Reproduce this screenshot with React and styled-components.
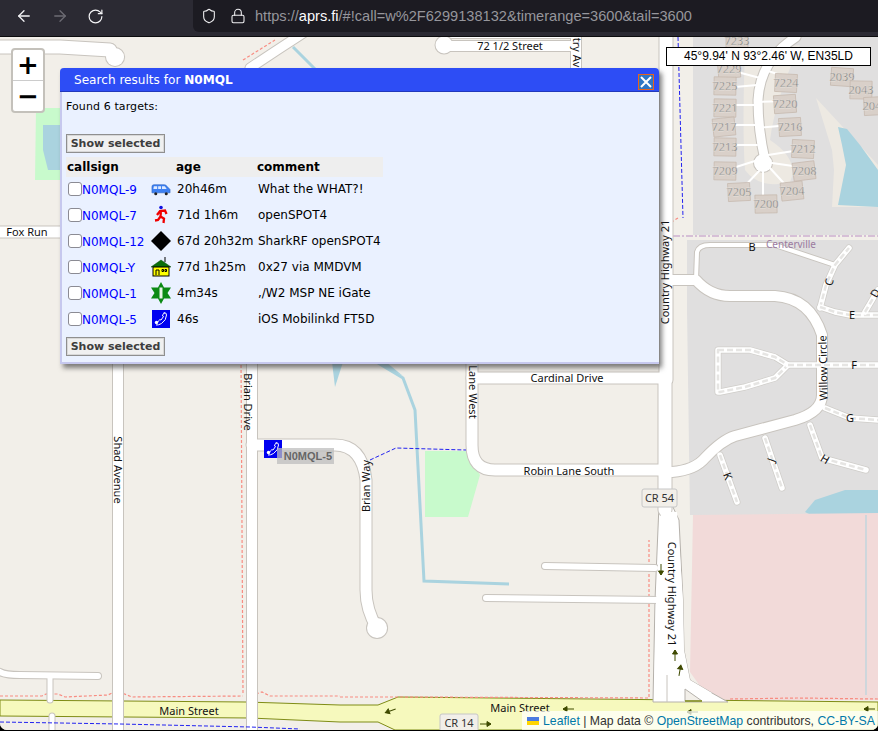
import React from "react";
import styled, { createGlobalStyle } from "styled-components";
import { ArrowLeft, ArrowRight, RotateCw, Shield, Lock } from "lucide-react";

const GlobalStyle = createGlobalStyle`
  html, body { margin: 0; padding: 0; background: #000; }
  body { width: 878px; height: 731px; overflow: hidden; font-family: "Liberation Sans", Arial, sans-serif; }
`;

const Page = styled.div`
  width: 878px;
  height: 731px;
  display: flex;
  flex-direction: column;
  background: #000;
`;

const BrowserBar = styled.header`
  height: 36px;
  flex: none;
  display: flex;
  align-items: flex-start;
  background: #2b2a33;
  border-bottom: 1px solid #0c0c0e;
`;

const NavButtons = styled.div`
  width: 193px;
  height: 32px;
  padding-left: 15px;
  box-sizing: border-box;
  display: flex;
  align-items: center;
  gap: 18px;
  flex: none;
`;

const NavIcon = styled.span`
  display: flex;
  color: ${(p) => (p.$dim ? "#6d6c74" : "#f4f4f6")};
`;

const UrlBox = styled.div`
  flex: 1;
  height: 32px;
  display: flex;
  align-items: center;
  padding-left: 8px;
  background: #1c1b22;
  border-bottom-left-radius: 6px;
  color: #f0f0f2;
`;

const UrlIcons = styled.div`
  display: flex;
  align-items: center;
  gap: 13px;
  width: 54px;
`;

const UrlText = styled.div`
  font-size: 14.6px;
  color: #96969c;
  white-space: nowrap;
  b { font-weight: 400; color: #fbfbfe; }
`;

const MapArea = styled.main`
  position: relative;
  flex: 1;
  margin-bottom: 1px;
  overflow: hidden;
  background: #f2efe9;
  border-radius: 0 0 7px 7px;
`;

const MapSvg = styled.svg`
  display: block;
  width: 878px;
  height: 693px;
`;

const ZoomControl = styled.div`
  position: absolute;
  left: 11px;
  top: 11px;
  width: 30px;
  border: 2px solid #c4c1bb;
  border-radius: 4px;
  background: #fff;
`;

const ZoomButton = styled.div`
  height: 30px;
  display: flex;
  align-items: center;
  justify-content: center;
  font: bold 26px "DejaVu Sans", sans-serif;
  line-height: 30px;
  color: #000;
  & + & { border-top: 1px solid #ccc; }
`;

const CoordBox = styled.div`
  position: absolute;
  left: 666px;
  top: 10px;
  width: 203px;
  height: 17px;
  border: 1px solid #000;
  background: #fff;
  font-size: 12px;
  line-height: 17px;
  text-align: center;
  color: #000;
  white-space: nowrap;
`;

const Attribution = styled.div`
  position: absolute;
  right: 0;
  bottom: 0;
  width: 356px;
  height: 19px;
  box-sizing: border-box;
  padding-left: 5px;
  display: flex;
  align-items: center;
  gap: 4px;
  background: rgba(255, 255, 255, 0.72);
  font-size: 12.25px;
  color: #333;
  white-space: nowrap;
  a { color: #0078a8; text-decoration: none; }
`;

const Popup = styled.section`
  position: absolute;
  left: 60px;
  top: 31px;
  width: 599px;
  height: 296px;
  box-sizing: border-box;
  display: flex;
  flex-direction: column;
  background: #eaf1ff;
  border: solid #c6c8ee;
  border-width: 0 0 2px 2px;
  border-radius: 4px 4px 0 0;
  box-shadow: 3px 4px 5px rgba(60, 60, 60, 0.65);
  font-family: "DejaVu Sans", Verdana, sans-serif;
  font-size: 11px;
  color: #000;
`;

const TitleBar = styled.div`
  height: 23px;
  flex: none;
  margin-left: -2px;
  padding-left: 14px;
  display: flex;
  align-items: center;
  justify-content: space-between;
  background: #2d4df5;
  border-bottom: 1px solid #2238bb;
  border-radius: 4px 4px 0 0;
  font-size: 12.1px;
  color: #fff;
  b { font-weight: 700; }
`;

const CloseButton = styled.div`
  width: 14px;
  height: 14px;
  margin: 5px 5px 0 0;
  border: 1px solid #e8641b;
  background: #2f76c4;
  display: flex;
  align-items: center;
  justify-content: center;
`;

const PopupBody = styled.div`
  flex: 1;
  padding: 7px 0 0 4px;
  display: flex;
  flex-direction: column;
  align-items: flex-start;
`;

const FoundText = styled.div`
  height: 15px;
  line-height: 15px;
  margin-bottom: 20px;
  letter-spacing: 0.1px;
`;

const ShowButton = styled.div`
  width: 99px;
  height: 19px;
  box-sizing: border-box;
  border: 1px solid #8f8f8f;
  box-shadow: inset 0 0 0 1px #d8d8d8;
  background: #f0f0f0;
  font-weight: 700;
  font-size: 11px;
  line-height: 17px;
  text-align: center;
  color: #3d3d3d;
  white-space: nowrap;
`;

const Results = styled.table`
  width: 317px;
  margin: 4px 0 4px;
  border-collapse: collapse;
  table-layout: fixed;
  th {
    height: 20px;
    padding: 0 0 0 1px;
    background: #eeeeee;
    font-size: 12px;
    font-weight: 700;
    text-align: left;
  }
  th + th { padding-left: 0; }
  td {
    height: 26px;
    padding: 0 0 2px 1px;
    box-sizing: border-box;
    white-space: nowrap;
    font-size: 12px;
    vertical-align: middle;
  }
`;

const Tick = styled.input.attrs({ type: "checkbox" })`
  appearance: none;
  width: 14px;
  height: 14px;
  margin: 0 0 0 1px;
  vertical-align: -2px;
  background: #fff;
  border: 1px solid #8b8b93;
  border-radius: 3px;
`;

const CallLink = styled.a`
  color: #0000ff;
  text-decoration: none;
  font-size: 12px;
`;

const SymbolCell = styled.span`
  display: flex;
  align-items: center;
  justify-content: center;
  width: 20px;
  height: 20px;
  margin-left: -1px;
`;

const Marker = styled.div`
  position: absolute;
  left: 264px;
  top: 403px;
  width: 18px;
  height: 18px;
  display: flex;
`;

const MarkerLabel = styled.div`
  position: absolute;
  left: 277px;
  top: 411px;
  width: 57px;
  height: 16px;
  background: rgba(190, 190, 190, 0.75);
  font: bold 11px/17px "Liberation Sans", Arial, sans-serif;
  text-align: right;
  padding-right: 2px;
  box-sizing: border-box;
  color: #666;
`;

const VanIcon = () => (
  <svg width="21" height="20" viewBox="0 0 21 20">
    <path d="M1 14V7.500Q1 5.500 3 5.500H14Q16 5.500 17 7.500L20 10.500V14Z" fill="#3d80f2" stroke="#2a60c0" strokeWidth=".6" />
    <path d="M3 7H6.500V10H2.500ZM7.500 7H10.500V10H7.500ZM11.500 7H14.500L16.500 10H11.500Z" fill="#dfeaff" />
    <circle cx="5" cy="15" r="1.600" fill="#222" />
    <circle cx="16" cy="15" r="1.600" fill="#222" />
  </svg>
);

const RunnerIcon = () => (
  <svg width="20" height="20" viewBox="0 0 20 20">
    <circle cx="10" cy="2.500" r="1.800" fill="#1010e0" />
    <path d="M6 10l3-4 5-.5 1.500 3.500M10 6l-.5 5.500 3.500 2-.5 4.500M9.500 11.500L7 15l-3 .5" fill="none" stroke="#f00000" strokeWidth="2.300" />
  </svg>
);

const DiamondIcon = () => (
  <svg width="20" height="20" viewBox="0 0 20 20">
    <path d="M10 0l10 10-10 10L0 10z" fill="#000" />
  </svg>
);

const HouseIcon = () => (
  <svg width="20" height="20" viewBox="0 0 20 20">
    <path d="M14 0v5" stroke="#000" strokeWidth="1" />
    <path d="M0 10l10-7 10 7z" fill="#0a6f0a" stroke="#084a08" strokeWidth=".5" />
    <rect x="2" y="10" width="16" height="9" fill="#ffff00" stroke="#000" />
    <path d="M5 18v-5h3v5M11 12.500h1.500v2H11zM14 12.500h1.500v2H14z" fill="none" stroke="#000" />
  </svg>
);

const StarIcon = () => (
  <svg width="20" height="22" viewBox="0 0 20 22">
    <path d="M10 0l3 5.500h7l-3.500 5.500 3.500 5.500h-7L10 22l-3-5.500H0L3.500 11 0 5.500h7z" fill="#0b8a14" />
    <rect x="8.500" y="5.500" width="3" height="11" fill="#e8f4e8" />
  </svg>
);

const PhoneIcon = () => (
  <svg width="18" height="18" viewBox="0 0 18 18">
    <rect width="18" height="18" fill="#0000f0" />
    <path d="M11.500 3q3 -1 3 2 0 5-5 8.500-3 1.800-5.500 1.500M13 2.500q-3 2-2.500 3.500l1 .5-2.500 3.500-1.200-.3q-1.500 1-2 2.300" fill="none" stroke="#fff" strokeWidth="1" />
    <circle cx="4.500" cy="12.500" r="1.700" fill="#fff" />
  </svg>
);

const RESULTS = [
  { call: "N0MQL-9", icon: <VanIcon />, age: "20h46m", comment: "What the WHAT?!" },
  { call: "N0MQL-7", icon: <RunnerIcon />, age: "71d 1h6m", comment: "openSPOT4" },
  { call: "N0MQL-12", icon: <DiamondIcon />, age: "67d 20h32m", comment: "SharkRF openSPOT4" },
  { call: "N0MQL-Y", icon: <HouseIcon />, age: "77d 1h25m", comment: "0x27 via MMDVM" },
  { call: "N0MQL-1", icon: <StarIcon />, age: "4m34s", comment: ",/W2 MSP NE iGate" },
  { call: "N0MQL-5", icon: <PhoneIcon />, age: "46s", comment: "iOS Mobilinkd FT5D" },
];

// map data, page coordinates (the svg viewBox starts at y=37)
const ROADS = [
  ["M-5 47L60 47 110 50", 13],
  ["M115 57L115.100 57", 18],
  ["M444 46H576", 10],
  ["M444 45L444.100 45", 17],
  ["M452 35H576", 6],
  ["M308 30Q280 48 250 68", 9],
  ["M576 30V70", 10],
  ["M-5 232L65 232", 11],
  ["M666 30V380M665 380V510", 13],
  ["M118 360V731", 10],
  ["M252 360V731", 10],
  ["M252 445H335Q362 445 366 480V590Q366 610 377 628", 11],
  ["M377 628L377.100 628", 20],
  ["M472 360V445Q472 470 495 470H664", 11],
  ["M472 378H664", 11],
  ["M486 598L660 600", 6],
  ["M545 566L655 568", 6],
  ["M0 672Q5 675 20 675L98 676", 6],
  ["M50 676V700", 5],
  ["M52 716V731", 5],
  ["M672 280H696Q710 296 730 296H775Q810 298 822 335V395Q822 412 795 420L735 436Q722 440 705 458 695 470 672 472", 10],
  ["M696 280L697 252Q699 245 710 245H775L835 265", 4],
  ["M796 37Q760 60 758 100 758 130 765 160", 9],
  ["M763 163L763.100 163", 18],
];

// the highway widens into two carriageways before Main Street
const HIGHWAY_SOUTH = "M659 505L655 600 653 702H728L712 693 690 680 684 650 683 600 679 520 672 505Z";

const TRACKS = [
  "M718 350H750L775 357 788 365 775 378 745 387 720 392H718Z",
  "M788 365H878",
  "M825 408L850 418 878 420",
  "M810 425L822 458 866 470",
  "M765 438L782 488",
  "M720 455L737 502",
  "M820 308L826 285 835 265 849 248",
  "M820 307L835 312 850 315H878",
  "M865 312L878 290",
];

const DRIVEWAYS = [
  "M730 70L760 78", "M735 87L757 85", "M735 105H757", "M735 125H757", "M735 145H757",
  "M733 168L758 160", "M741 190L760 170", "M763 170V204", "M770 168L790 190",
  "M772 163L800 167", "M768 155L800 150", "M757 128L790 125", "M757 102L785 101", "M765 70L790 78",
];

const HOUSES = [
  [737, 41, "7233"], [729, 69, "7229"], [725, 86, "7225"], [725, 108, "7221"], [724, 127, "7217"],
  [725, 147, "7213"], [725, 171, "7209"], [739, 192, "7205"], [766, 204, "7200"], [792, 191, "7204"],
  [804, 171, "7208"], [803, 149, "7212"], [790, 127, "7216"], [785, 104, "7220"], [786, 83, "7224"],
  [842, 77, "2039"], [861, 90, "2043"], [875, 106, "2047"],
];

const LABELS = [
  [510, 46, 0, "72 1/2 Street", 11],
  [27, 232, 0, "Fox Run", 11],
  [567, 378, 0, "Cardinal Drive", 11],
  [569, 471, 0, "Robin Lane South", 11],
  [189, 711, 0, "Main Street", 11],
  [520, 708, 0, "Main Street", 11],
  [118, 470, 90, "Shad Avenue", 11],
  [248, 402, 90, "Brian Drive", 11],
  [473, 392, 90, "Lane West", 11],
  [366, 486, -90, "Brian Way", 11],
  [665, 272, -90, "Country Highway 21", 11],
  [672, 594, 90, "Country Highway 21", 11],
  [577, 52, 90, "Country Avenue", 11],
  [823, 368, -91, "Willow Circle", 11],
  [752, 247, 0, "B", 11],
  [829, 282, -75, "C", 11],
  [852, 315, 0, "E", 11],
  [875, 293, -60, "D", 11],
  [854, 365, 0, "F", 11],
  [850, 418, 0, "G", 11],
  [825, 459, 30, "H", 11],
  [771, 460, -70, "J", 11],
  [728, 476, 70, "K", 11],
];

const ARROWS = [
  [390, 711, -20], [568, 709, 0], [692, 712, 0], [869, 709, 0], [486, 724, 180],
  [661, 570, -90], [675, 655, 90], [680, 670, 100],
];

function MapDrawing() {
  return (
    <MapSvg viewBox="0 37 878 693">
      <rect x="0" y="37" width="878" height="693" fill="#f2efe9" />
      <path d="M36 108H60V180H35Z" fill="#c8facc" />
      <path d="M43 125H60V170H48L43 150Z" fill="#aad3df" />
      <path d="M425 451H466L480 475 468 517H425Z" fill="#c8facc" />
      <path d="M860 37H878V45H870Z" fill="#c8facc" />
      <path d="M693 37H878V235H693Z" fill="#e0dfdf" />
      <path d="M686 240H878V515H690Z" fill="#e0dfdf" />
      <path d="M745 50Q742 130 745 170 760 190 790 182 800 160 770 140 775 100 800 45Z" fill="#ede9e2" />
      <path d="M816 98L878 165V207H832L834 170 832 150Z" fill="#ede9e2" />
      <path d="M838 127L847 129 860 145 878 170V207L838 205 842 185 846 165 842 145Z" fill="#aad3df" />
      <path d="M805 512L815 500 845 490 878 490V515L815 517Z" fill="#aad3df" />
      <path d="M693 515L878 513V700H710L690 672Z" fill="#f2dad9" />
      <path d="M866 515V695" stroke="#aad3df" strokeWidth="1" />
      <path d="M675 37H692V235H675ZM672 240H687V515H672Z" fill="#f2efe9" />

      <path d="M293 47L316 70" stroke="#aad3df" strokeWidth="3" fill="none" />
      <path d="M373 360L403 378 415 410 424 581 509 584" stroke="#aad3df" strokeWidth="3" fill="none" />
      <path d="M332 362H343L335 387Z" fill="#aad3df" />
      <path d="M374 362H386L403 376Z" fill="#aad3df" />

      <path d="M0 700L246 702 340 705 378 705 398 697 878 702V730H395L378 722 340 722 250 718 0 716Z" fill="#f6f9bd" stroke="#7f8c16" strokeWidth="1" />

      {/* boundaries */}
      <g fill="none" stroke="#f88c82" strokeWidth="1.200" strokeDasharray="3 2">
        <path d="M243 60L275 40" />
        <path d="M241 360L243 694" />
        <path d="M0 696L42 696 46 694 58 694 65 697 108 695 112 693 122 693 132 697 243 696M256 694L262 692 270 696 340 696" />
        <path d="M340 697H398L649 698V540M730 699L797 698 878 699" />
        <path d="M663 37V70" stroke="#cf9dc0" />
        <path d="M678 218L662 228" />
      </g>
      <path d="M660 236H878" stroke="#cdb0cf" strokeWidth="1.500" strokeDasharray="7 2 2 2" fill="none" />

      <path d={HIGHWAY_SOUTH} fill="#fff" stroke="#b5b1ab" strokeWidth="1" />

      {/* roads, casing first */}
      <g fill="none" strokeLinecap="round" strokeLinejoin="round">
        {ROADS.map(([d, w]) => (
          <path key={d + "c"} d={d} stroke="#c8c4be" strokeWidth={w + 2} />
        ))}
        {TRACKS.map((d) => (
          <path key={d + "c"} d={d} stroke="#cfcdc9" strokeWidth="7" />
        ))}
        {DRIVEWAYS.map((d) => (
          <path key={d} d={d} stroke="#fff" strokeWidth="2" />
        ))}
        {ROADS.map(([d, w]) => (
          <path key={d} d={d} stroke="#fff" strokeWidth={w} />
        ))}
        {TRACKS.map((d) => (
          <g key={d}>
            <path d={d} stroke="#fff" strokeWidth="5.500" />
            <path d={d} stroke="#e6e5e3" strokeWidth="2.500" strokeDasharray="6 3" strokeLinecap="butt" />
          </g>
        ))}
      </g>
      <path d="M661 512H677L683 600 684 650 690 680 712 693 700 701H654L656 600Z" fill="#fff" />
      <path d="M667 675V702" stroke="#c8c4be" strokeWidth="1" />
      <path d="M685 689L702 701H685Z" fill="#f2efe9" stroke="#b5b1ab" strokeWidth="1" />
      <path d="M685 701H702" stroke="#7f8c16" strokeWidth="1.500" />

      <path d="M0 722L120 724 250 727 300 729" stroke="#2222f0" strokeDasharray="4 2" fill="none" />
      <path d="M678 37L683 218" stroke="#2222f0" strokeDasharray="4 2" fill="none" />
      <path d="M370 460L396 448 466 450" stroke="#2222f0" strokeDasharray="4 2" fill="none" />

      {HOUSES.map(([x, y, n]) => (
        <g key={n}>
          <rect x={x - 11} y={y - 9} width="22" height="18" fill="#d9d0c9" stroke="#c4b6ab" strokeWidth=".7" transform={`rotate(${(x * 7) % 17 - 8} ${x} ${y})`} />
          <text x={x} y={y + 4} textAnchor="middle" fontFamily="Noto Sans" fontSize="11" fill="#666" stroke="#f2efe9" strokeWidth="0.300">{n}</text>
        </g>
      ))}

      {LABELS.map(([x, y, r, t, s]) => (
        <text key={t + x} x={x} y={y + 4} textAnchor="middle" fontFamily="Noto Sans" fontSize={s} fill="#111" transform={r ? `rotate(${r} ${x} ${y})` : undefined}>{t}</text>
      ))}
      <text x="791" y="248" textAnchor="middle" fontFamily="Noto Sans" fontSize="10" fill="#9b7ba0">Centerville</text>

      {[[642, 489, 35, "CR 54"], [440, 714, 38, "CR 14"]].map(([x, y, w, t]) => (
        <g key={t}>
          <rect x={x} y={y} width={w} height="18" rx="2" fill="#f2efe9" stroke="#c6c6c6" />
          <text x={x + w / 2} y={y + 13} textAnchor="middle" fontFamily="Noto Sans" fontSize="11" fill="#333">{t}</text>
        </g>
      ))}

      {ARROWS.map(([x, y, r]) => (
        <path key={x + "-" + y} d="M-5 0H6M-5 0L-1 -2.500V2.500Z" transform={`translate(${x} ${y}) rotate(${r})`} stroke="#3f4a00" strokeWidth="1" fill="#3f4a00" />
      ))}
    </MapSvg>
  );
}

export default function App() {
  return (
    <Page>
      <GlobalStyle />
      <BrowserBar>
        <NavButtons>
          <NavIcon><ArrowLeft size={18} strokeWidth={1.700} /></NavIcon>
          <NavIcon $dim><ArrowRight size={18} strokeWidth={1.700} /></NavIcon>
          <NavIcon><RotateCw size={17} strokeWidth={1.700} /></NavIcon>
        </NavButtons>
        <UrlBox>
          <UrlIcons>
            <Shield size={16} strokeWidth={1.600} />
            <Lock size={16} strokeWidth={1.600} />
          </UrlIcons>
          <UrlText>https://<b>aprs.fi</b>/#!call=w%2F6299138132&amp;timerange=3600&amp;tail=3600</UrlText>
        </UrlBox>
      </BrowserBar>

      <MapArea>
        <MapDrawing />
        <ZoomControl>
          <ZoomButton>+</ZoomButton>
          <ZoomButton>−</ZoomButton>
        </ZoomControl>
        <CoordBox>45°9.94' N 93°2.46' W, EN35LD</CoordBox>

        <Marker><PhoneIcon /></Marker>
        <MarkerLabel>N0MQL-5</MarkerLabel>

        <Popup>
          <TitleBar>
            <span>Search results for <b>N0MQL</b></span>
            <CloseButton>
              <svg width="12" height="12" viewBox="0 0 12 12">
                <path d="M1 1L11 11M11 1L1 11" stroke="#fff" strokeWidth="2" />
              </svg>
            </CloseButton>
          </TitleBar>
          <PopupBody>
            <FoundText>Found 6 targets:</FoundText>
            <ShowButton>Show selected</ShowButton>
            <Results>
              <colgroup>
                <col style={{ width: 85 }} />
                <col style={{ width: 25 }} />
                <col style={{ width: 81 }} />
                <col />
              </colgroup>
              <thead>
                <tr>
                  <th>callsign</th>
                  <th />
                  <th>age</th>
                  <th>comment</th>
                </tr>
              </thead>
              <tbody>
                {RESULTS.map((r) => (
                  <tr key={r.call}>
                    <td><Tick /><CallLink href="#">{r.call}</CallLink></td>
                    <td><SymbolCell>{r.icon}</SymbolCell></td>
                    <td>{r.age}</td>
                    <td>{r.comment}</td>
                  </tr>
                ))}
              </tbody>
            </Results>
            <ShowButton>Show selected</ShowButton>
          </PopupBody>
        </Popup>

        <Attribution>
          <svg width="12" height="8" viewBox="0 0 12 8">
            <rect width="12" height="4" fill="#4c7be1" />
            <rect y="4" width="12" height="4" fill="#ffd500" />
          </svg>
          <span><a href="#">Leaflet</a> | Map data © <a href="#">OpenStreetMap</a> contributors, <a href="#">CC-BY-SA</a></span>
        </Attribution>
      </MapArea>
    </Page>
  );
}
